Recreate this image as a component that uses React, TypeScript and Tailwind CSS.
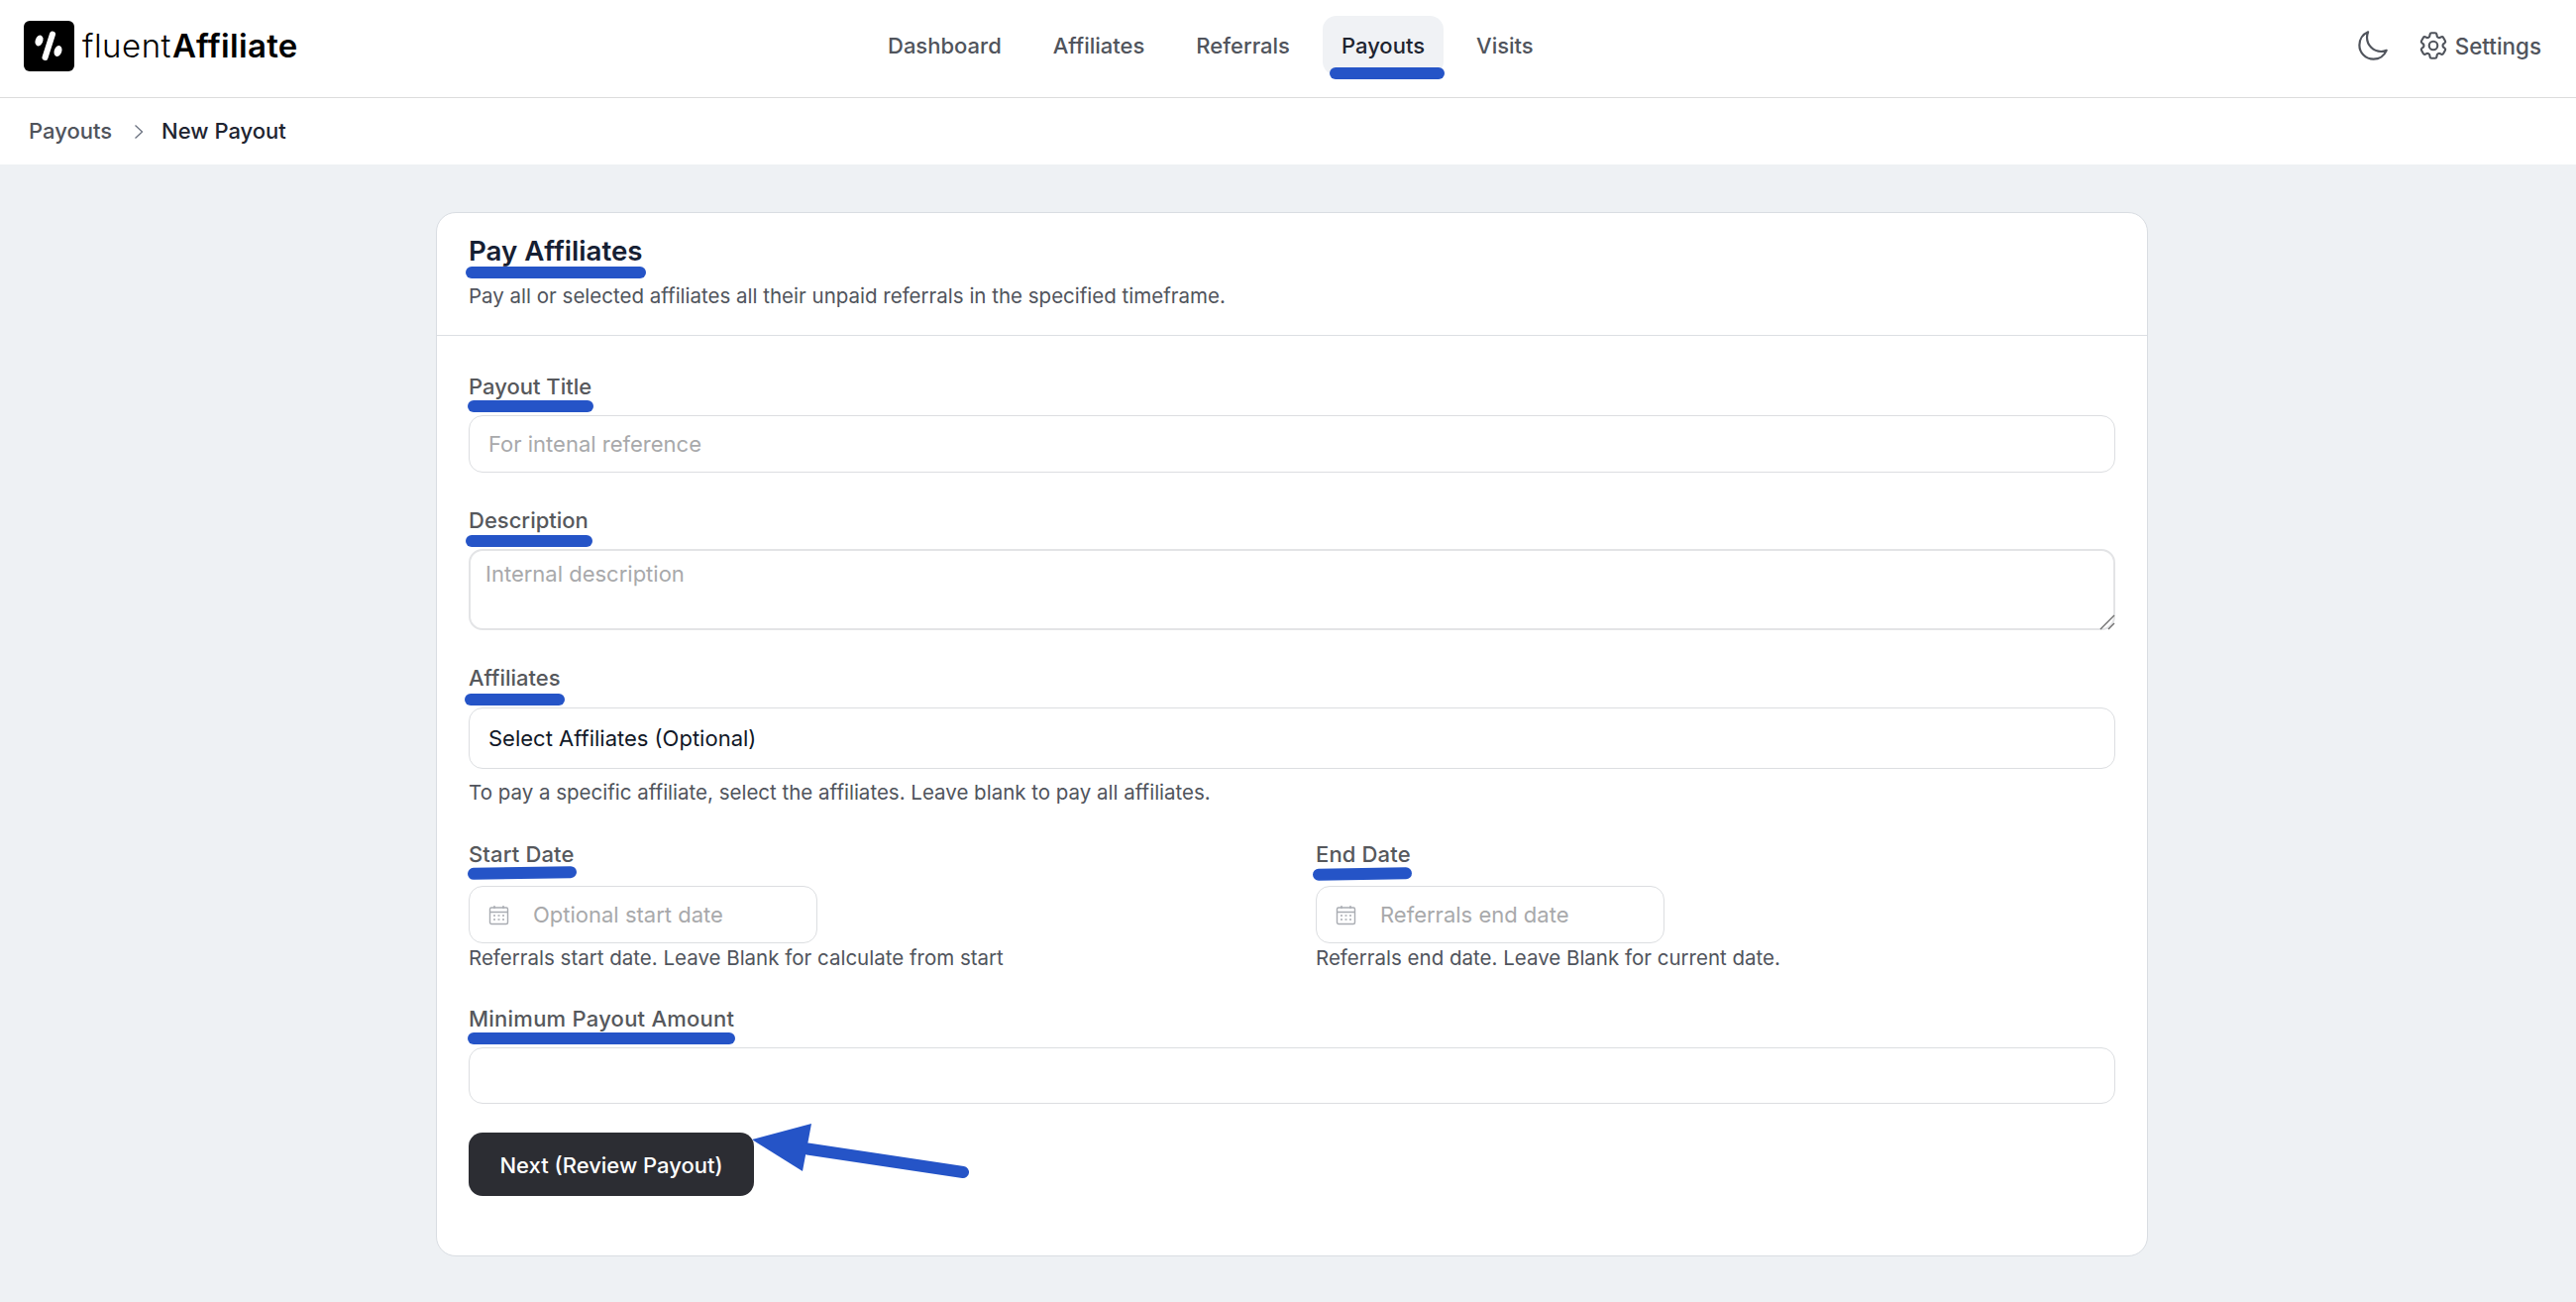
import React from "react";
import { HiOutlineMoon, HiOutlineCog6Tooth } from "react-icons/hi2";

function Label({ text, line, className = "" }: { text: string; line: string; className?: string }) {
  return (
    <div className={"relative h-[30px] w-fit text-[22px] leading-[30px] font-medium text-[#56585c] " + className}>
      {text}
      <span className={"absolute h-3 rounded-full bg-[#2554c7] " + line} />
    </div>
  );
}

function Calendar() {
  return (
    <svg width="21" height="21" viewBox="0 0 21 21" fill="none" stroke="#a9acb2" strokeWidth="1.4" className="shrink-0">
      <rect x="1.5" y="3" width="18" height="16.5" rx="1.5" />
      <path d="M1.5 7.5H19.5M6 1V4M15 1V4" />
      <path d="M5 11H7M9.5 11H11.5M14 11H16M5 15H7M9.5 15H11.5M14 15H16" />
    </svg>
  );
}

function DateInput({ placeholder }: { placeholder: string }) {
  return (
    <div className="flex h-[58px] w-[352px] items-center rounded-[14px] border border-[#dcdee1] bg-white pl-[19px]">
      <Calendar />
      <input
        placeholder={placeholder}
        className="ml-[24px] w-[280px] bg-transparent text-[22px] outline-none placeholder:text-[#a8a9ab]"
      />
    </div>
  );
}

export default function App() {
  const nav = ["Dashboard", "Affiliates", "Referrals", "Payouts", "Visits"];
  return (
    <div className="min-h-screen bg-[#eef1f4] font-['Inter',sans-serif]">
      <header className="flex h-[99px] items-center border-b border-[#dcdcdc] bg-white pb-[6px] pl-6 pr-[35px]">
        <div className="flex w-[275px] items-center">
          <svg width="51" height="51" viewBox="0 0 51 51" className="shrink-0">
            <rect width="51" height="51" rx="6" fill="#000" />
            <path d="M29 13.5L21.5 37" stroke="#fff" strokeWidth="6" strokeLinecap="round" />
            <ellipse cx="15.5" cy="20" rx="3.8" ry="5.6" fill="#fff" transform="rotate(20 15.5 20)" />
            <ellipse cx="34.5" cy="30.5" rx="3.8" ry="5.6" fill="#fff" transform="rotate(20 34.5 30.5)" />
          </svg>
          <div className="ml-2 text-[33px] leading-none text-black">
            <span className="font-light tracking-[0.5px]">fluent</span>
            <span className="ml-px font-semibold tracking-[0.3px]">Affiliate</span>
          </div>
        </div>
        <nav className="ml-[578px] flex items-center gap-[14px]">
          {nav.map((n) => (
            <a
              key={n}
              className={
                n === "Payouts"
                  ? "relative flex h-[60px] items-center rounded-[14px] bg-[#f0f2f5] px-[19px] pt-px text-[22px] font-medium text-[#1e2430]"
                  : "flex h-[60px] items-center px-[19px] pt-px text-[22px] font-medium text-[#50545c]"
              }
            >
              {n}
              {n === "Payouts" && <span className="absolute left-[7px] top-[52px] h-3 w-[116px] rounded-full bg-[#2554c7]" />}
            </a>
          ))}
        </nav>
        <div className="ml-auto flex items-center text-[#50545c]">
          <HiOutlineMoon size={35} />
          <HiOutlineCog6Tooth size={34} className="ml-[27px]" />
          <span className="ml-[5px] pt-px text-[22.4px] font-medium">Settings</span>
        </div>
      </header>

      <div className="flex h-[67px] items-center bg-white pl-[29px] text-[22px]">
        <span className="font-medium text-[#50545c]">Payouts</span>
        <svg width="10" height="16" viewBox="0 0 10 16" fill="none" stroke="#6b7280" strokeWidth="1.3" className="ml-[22px]">
          <path d="M1.5 1.5L8.5 8L1.5 14.5" />
        </svg>
        <span className="ml-[18px] font-medium text-[#1e2430]">New Payout</span>
      </div>

      <main className="ml-[440px] w-[1728px] pt-[48px] pb-[43px]">
        <div className="rounded-[20px] border border-[#d9dde2] bg-white">
          <div className="h-[124px] border-b border-[#dcdfe3] px-[32px] pt-[19px]">
            <div className="relative h-[38px] w-fit text-[27.7px] leading-[38px] font-semibold text-[#162033]">
              Pay Affiliates
              <span className="absolute left-[-3px] top-[35px] h-3 w-[182px] rounded-full bg-[#2554c7]" />
            </div>
            <p className="mt-[13px] text-[20.5px] leading-[28px] text-[#50545c]">
              Pay all or selected affiliates all their unpaid referrals in the specified timeframe.
            </p>
          </div>

          <div className="px-[32px] pt-[36px] pb-[60px]">
            <Label text="Payout Title" line="left-[-1px] top-[29px] w-[127px]" />
            <input
              placeholder="For intenal reference"
              className="mt-[14px] block h-[58px] w-full rounded-[14px] border border-[#dcdee1] px-[19px] text-[22px] outline-none placeholder:text-[#a8a9ab]"
            />

            <Label text="Description" line="left-[-3px] top-[30px] w-[128px]" className="mt-[33px]" />
            <div className="relative mt-[14px]">
              <textarea
                placeholder="Internal description"
                className="block h-[82px] w-full resize-none rounded-[14px] border-2 border-[#e3e4e6] px-[15px] py-[7px] text-[22px] leading-[32px] outline-none placeholder:text-[#a8a9ab]"
              />
              <svg width="16" height="16" viewBox="0 0 16 16" fill="none" stroke="#6e6e6e" strokeWidth="1.4" className="absolute right-0 bottom-0">
                <path d="M1 15L15 1M9 15L15 9" />
              </svg>
            </div>

            <Label text="Affiliates" line="left-[-4px] top-[31px] w-[101px]" className="mt-[33px]" />
            <div className="mt-[15px] flex h-[62px] items-center rounded-[14px] border border-[#dcdee1] px-[19px] text-[22px] text-[#111827]">
              Select Affiliates (Optional)
            </div>
            <p className="mt-[10px] text-[20.5px] leading-[28px] text-[#50545c]">
              To pay a specific affiliate, select the affiliates. Leave blank to pay all affiliates.
            </p>

            <div className="mt-[33px] grid grid-cols-[855px_1fr]">
              <div>
                <Label text="Start Date" line="left-[-1px] top-[28px] w-[110px] -rotate-1" className="tracking-[0.15px]" />
                <div className="mt-[17px]">
                  <DateInput placeholder="Optional start date" />
                </div>
                <p className="mt-[1px] text-[20.5px] leading-[28px] text-[#50545c]">
                  Referrals start date. Leave Blank for calculate from start
                </p>
              </div>
              <div>
                <Label text="End Date" line="left-[-3px] top-[29px] w-[100px] -rotate-1" className="tracking-[0.15px]" />
                <div className="mt-[17px]">
                  <DateInput placeholder="Referrals end date" />
                </div>
                <p className="mt-[1px] text-[20.5px] leading-[28px] text-[#50545c]">
                  Referrals end date. Leave Blank for current date.
                </p>
              </div>
            </div>

            <Label text="Minimum Payout Amount" line="left-[-1px] top-[29px] w-[270px]" className="mt-[32px] tracking-[0.24px]" />
            <input className="mt-[14px] block h-[57px] w-full rounded-[14px] border border-[#dcdee1] px-[19px] text-[22px] outline-none" />

            <div className="relative mt-[29px] w-fit">
              <button className="flex h-[64px] w-[288px] items-center justify-center rounded-[14px] bg-[#2c2d33] pt-[2px] text-[22px] font-medium text-white">
                Next (Review Payout)
              </button>
              <svg width="240" height="70" viewBox="0 0 240 70" className="absolute left-[277px] top-[-15px]">
                <polygon points="9,22 69,6 60,54" fill="#2554c7" />
                <path d="M65 31.5L222 55" stroke="#2554c7" strokeWidth="12" strokeLinecap="round" />
              </svg>
            </div>
          </div>
        </div>
      </main>
    </div>
  );
}
